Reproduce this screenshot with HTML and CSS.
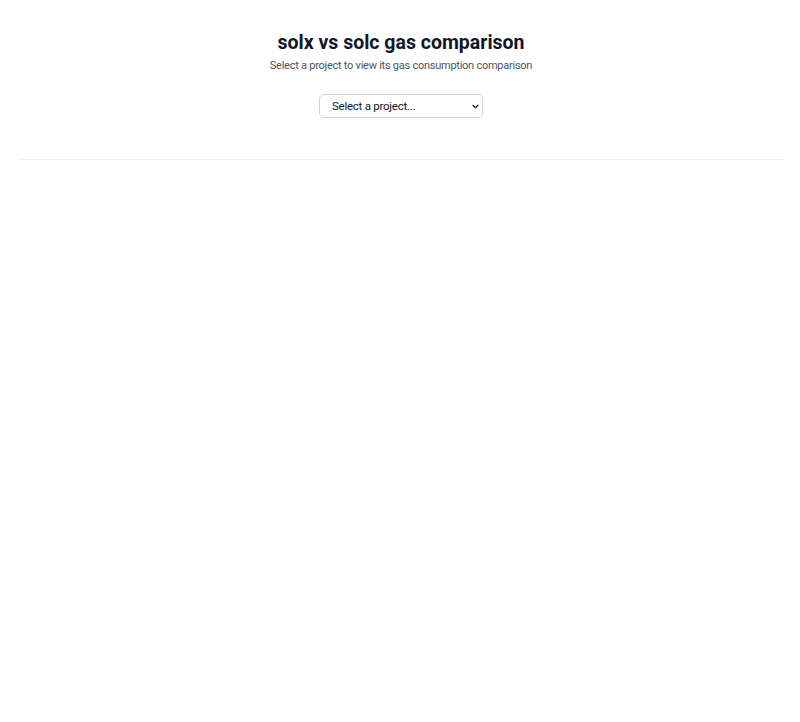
FILE: index.html
```html
<!DOCTYPE html>
<html>
<head>
<meta charset="utf-8">
<link rel="stylesheet" href="styles.css">
</head>
<body>
<div class="page">
  <header class="header">
    <h1 class="title">solx vs solc gas comparison</h1>
    <p class="subtitle">Select a project to view its gas consumption comparison</p>
  </header>
  <div class="controls">
    <select class="project-select">
      <option>Select a project...</option>
    </select>
  </div>
  <div class="chart-area"></div>
</div>
</body>
</html>
```
FILE: styles.css
```css
html, body {
  margin: 0;
  padding: 0;
  background: #ffffff;
}
body {
  font-family: Roboto, "Liberation Sans", Arial, sans-serif;
  color: #111827;
}
.page {
  padding: 31px 16px 0 18px;
}
.header {
  text-align: center;
}
.title {
  margin: 0;
  font-size: 19.5px;
  line-height: 24px;
  font-weight: 700;
  color: #111827;
}
.subtitle {
  margin: 3px 0 0;
  font-size: 11px;
  line-height: 16px;
  letter-spacing: -0.25px;
  color: #4b5563;
}
.controls {
  display: flex;
  justify-content: center;
  margin-top: 20px;
}
.project-select {
  appearance: none;
  -webkit-appearance: none;
  width: 164px;
  height: 24px;
  font-family: Roboto, "Liberation Sans", Arial, sans-serif;
  font-size: 11.5px;
  letter-spacing: -0.25px;
  color: #111827;
  background-color: #ffffff;
  background-image: url("data:image/svg+xml;utf8,<svg xmlns='http://www.w3.org/2000/svg' width='8' height='6' viewBox='0 0 8 6'><path d='M1 1.5 L4 4.5 L7 1.5' fill='none' stroke='%23111827' stroke-width='1.4' stroke-linecap='round' stroke-linejoin='round'/></svg>");
  background-repeat: no-repeat;
  background-position: right 3px center;
  background-size: 7px 5px;
  border: 1px solid #d1d5db;
  border-radius: 5px;
  padding: 0 18px 0 12px;
}
.chart-area {
  margin-top: 41px;
  border-top: 1px solid #f1f1f1;
}
```
